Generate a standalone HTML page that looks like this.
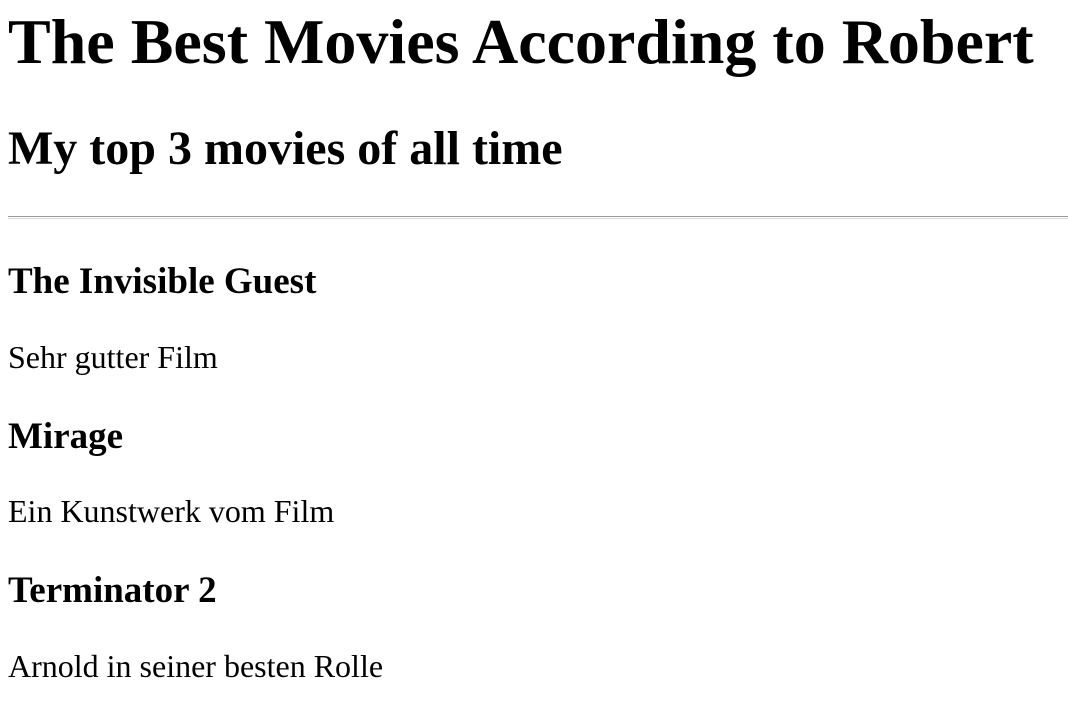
<!DOCTYPE html>
<html><head><meta charset="utf-8"><style>
html,body{margin:0;padding:0;background:#fff;width:1068px;height:714px;overflow:hidden;}
body{font-family:"Liberation Serif","Times New Roman",serif;color:#000;position:relative;}
.t{position:absolute;left:8px;margin:0;line-height:1;white-space:nowrap;}
.h1{font-size:64px;font-weight:bold;top:10px;}
.h2{font-size:48px;font-weight:bold;top:125px;}
.h4{font-size:37px;font-weight:bold;}
.p{font-size:32px;}
.hr{position:absolute;left:8px;right:0;top:216px;height:1px;border-top:1px solid #9a9a9a;border-bottom:1px solid #d8d8d8;}
</style></head><body>
<div class="t h1">The Best Movies According to Robert</div>
<div class="t h2">My top 3 movies of all time</div>
<div class="hr"></div>
<div class="t h4" style="top:263px">The Invisible Guest</div>
<div class="t p" style="top:341px">Sehr gutter Film</div>
<div class="t h4" style="top:418px">Mirage</div>
<div class="t p" style="top:495px">Ein Kunstwerk vom Film</div>
<div class="t h4" style="top:572px">Terminator 2</div>
<div class="t p" style="top:650px">Arnold in seiner besten Rolle</div>
</body></html>
